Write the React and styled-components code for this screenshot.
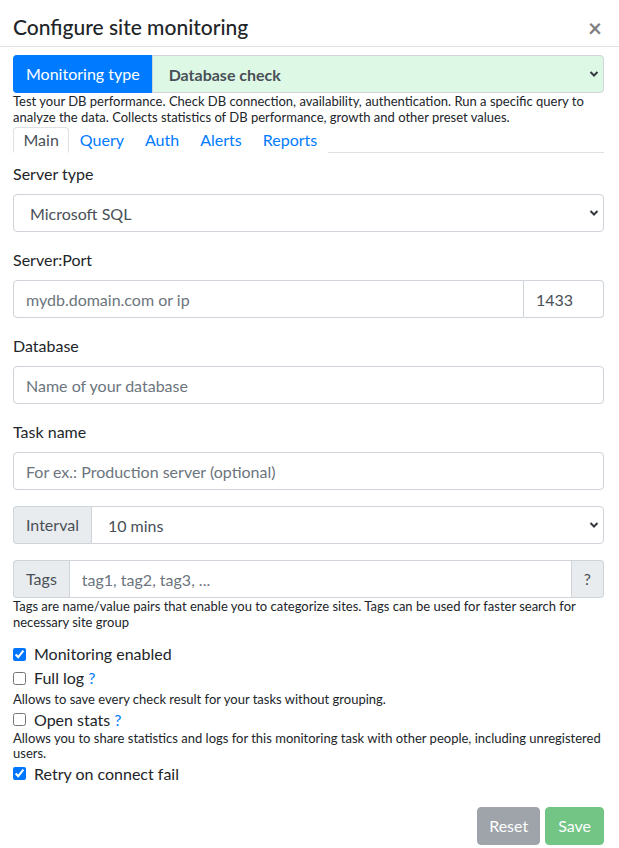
import React from "react";
import styled, { createGlobalStyle } from "styled-components";

const Global = createGlobalStyle`
  html, body { margin: 0; padding: 0; background: #fff; }
  body { font-family: Lato, "Liberation Sans", sans-serif; color: #212529; font-size: 16px; line-height: 1.5; }
  * { box-sizing: border-box; }
`;

const Modal = styled.div`
  width: 619px;
  background: #fff;
`;

const Header = styled.div`
  display: flex;
  align-items: center;
  justify-content: space-between;
  padding: 12px 15px 4px 13px;
  border-bottom: 1px solid #dee2e6;
  height: 47px;
`;

const Title = styled.h5`
  margin: 0;
  font-size: 21px;
  font-weight: 500;
  line-height: 30px;
`;

const Close = styled.button`
  border: 0;
  background: none;
  padding: 2px 2px 0 0;
  font-size: 24px;
  font-weight: 700;
  line-height: 1;
  color: #000;
  opacity: 0.5;
  font-family: inherit;
`;

const Body = styled.div`
  padding: 8px 15px 3px 13px;
`;

const Group = styled.div`
  display: flex;
  height: 38px;
  margin-bottom: ${(p) => p.$mb || 0}px;
`;

const Addon = styled.div`
  display: flex;
  align-items: center;
  padding: 0 12px;
  border: 1px solid ${(p) => (p.$primary ? "#007bff" : "#ced4da")};
  background: ${(p) => (p.$primary ? "#007bff" : "#e9ecef")};
  color: ${(p) => (p.$primary ? "#fff" : "#495057")};
  border-radius: ${(p) => (p.$right ? "0 4px 4px 0" : "4px 0 0 4px")};
  ${(p) => (p.$right ? "border-left: 0;" : "border-right: 0;")}
  white-space: nowrap;
  font-size: 16px;
`;

const SelectWrap = styled.div`
  position: relative;
  flex: 1;
  display: flex;
`;

const Select = styled.select`
  appearance: none;
  -webkit-appearance: none;
  flex: 1;
  width: 100%;
  height: 38px;
  padding: 0 28px 0 16px;
  font-family: inherit;
  font-size: 16px;
  color: #495057;
  font-weight: ${(p) => (p.$bold ? 700 : 400)};
  background: ${(p) => p.$bg || "#fff"};
  border: 1px solid #ced4da;
  border-radius: ${(p) => (p.$joined ? "0 4px 4px 0" : "4px")};
  outline: none;
`;

const Chevron = styled.svg`
  position: absolute;
  right: 5px;
  top: 15px;
  width: 10px;
  height: 8px;
  pointer-events: none;
`;

const Input = styled.input`
  flex: 1;
  min-width: 0;
  width: ${(p) => (p.$w ? `${p.$w}px` : "100%")};
  ${(p) => (p.$w ? "flex: none;" : "")}
  height: 38px;
  padding: 0 12px;
  font-family: inherit;
  font-size: 16px;
  color: #495057;
  border: 1px solid #ced4da;
  border-radius: ${(p) => p.$radius || "4px"};
  ${(p) => (p.$noLeft ? "border-left: 0;" : "")}
  outline: none;
  &::placeholder { color: #6c757d; opacity: 1; }
`;

const Hint = styled.div`
  font-size: 13px;
  line-height: 15.5px;
  color: #212529;
  margin-top: ${(p) => p.$mt || 1}px;
`;

const Tabs = styled.div`
  display: flex;
  border-bottom: 1px solid #dee2e6;
  margin-top: 2px;
`;

const Tab = styled.div`
  padding: 0 9.5px;
  line-height: 24px;
  margin-bottom: -1px;
  border: 1px solid ${(p) => (p.$active ? "#dee2e6" : "transparent")};
  border-bottom-color: ${(p) => (p.$active ? "#fff" : "transparent")};
  border-radius: 4px 4px 0 0;
  background: #fff;
  color: ${(p) => (p.$active ? "#495057" : "#007bff")};
`;

const FormGroup = styled.div`
  margin-bottom: 16px;
`;

const Label = styled.label`
  display: block;
  line-height: 24px;
  margin-bottom: 8px;
`;

const TabPane = styled.div`
  padding-top: 9px;
`;

const Checks = styled.div`
  margin-top: 12px;
`;

const CheckRow = styled.label`
  display: flex;
  align-items: center;
  line-height: 24px;
`;

const Box = styled.input`
  width: 13px;
  height: 13px;
  margin: 0 8px 0 0;
  accent-color: #0075ff;
`;

const Q = styled.span`
  color: #007bff;
  margin-left: 4px;
`;

const Footer = styled.div`
  display: flex;
  justify-content: flex-end;
  gap: 5px;
  margin-top: 21px;
`;

const Btn = styled.button`
  height: 38px;
  padding: 0 ${(p) => p.$px}px;
  font-family: inherit;
  font-size: 16px;
  color: #fff;
  border: 1px solid ${(p) => p.$c};
  background: ${(p) => p.$c};
  border-radius: 4px;
  opacity: 0.65;
`;

const Arrow = () => (
  <Chevron viewBox="0 0 10 8">
    <path d="M1.5 2 L5 5.5 L8.5 2" fill="none" stroke="#343a40" strokeWidth="2" />
  </Chevron>
);

const Field = ({ label, children }) => (
  <FormGroup>
    <Label>{label}</Label>
    {children}
  </FormGroup>
);

export default function App() {
  return (
    <>
      <Global />
      <Modal>
        <Header>
          <Title>Configure site monitoring</Title>
          <Close>×</Close>
        </Header>
        <Body>
          <Group>
            <Addon $primary>Monitoring type</Addon>
            <SelectWrap>
              <Select $joined $bold $bg="#ddf9e6" defaultValue="db">
                <option value="db">Database check</option>
              </Select>
              <Arrow />
            </SelectWrap>
          </Group>
          <Hint>
            Test your DB performance. Check DB connection, availability, authentication. Run a specific query to
            analyze the data. Collects statistics of DB performance, growth and other preset values.
          </Hint>
          <Tabs>
            <Tab $active>Main</Tab>
            <Tab>Query</Tab>
            <Tab>Auth</Tab>
            <Tab>Alerts</Tab>
            <Tab>Reports</Tab>
          </Tabs>
          <TabPane>
            <Field label="Server type">
              <SelectWrap>
                <Select defaultValue="ms">
                  <option value="ms">Microsoft SQL</option>
                </Select>
                <Arrow />
              </SelectWrap>
            </Field>
            <Field label="Server:Port">
              <Group>
                <Input placeholder="mydb.domain.com or ip" $radius="4px 0 0 4px" />
                <Input defaultValue="1433" $w={80} $radius="0 4px 4px 0" $noLeft />
              </Group>
            </Field>
            <Field label="Database">
              <Group>
                <Input placeholder="Name of your database" />
              </Group>
            </Field>
            <Field label="Task name">
              <Group>
                <Input placeholder="For ex.: Production server (optional)" />
              </Group>
            </Field>
            <Group $mb={16}>
              <Addon>Interval</Addon>
              <SelectWrap>
                <Select $joined defaultValue="10">
                  <option value="10">10 mins</option>
                </Select>
                <Arrow />
              </SelectWrap>
            </Group>
            <Group>
              <Addon>Tags</Addon>
              <Input placeholder="tag1, tag2, tag3, ..." $radius="0" />
              <Addon $right>?</Addon>
            </Group>
            <Hint>
              Tags are name/value pairs that enable you to categorize sites. Tags can be used for faster search for
              necessary site group
            </Hint>
            <Checks>
              <CheckRow>
                <Box type="checkbox" defaultChecked />
                Monitoring enabled
              </CheckRow>
              <CheckRow>
                <Box type="checkbox" />
                Full log<Q>?</Q>
              </CheckRow>
              <Hint $mt={2}>Allows to save every check result for your tasks without grouping.</Hint>
              <CheckRow>
                <Box type="checkbox" />
                Open stats<Q>?</Q>
              </CheckRow>
              <Hint $mt={-1}>
                Allows you to share statistics and logs for this monitoring task with other people, including
                unregistered users.
              </Hint>
              <CheckRow>
                <Box type="checkbox" defaultChecked />
                Retry on connect fail
              </CheckRow>
            </Checks>
            <Footer>
              <Btn $c="#6c757d" $px={11} disabled>Reset</Btn>
              <Btn $c="#28a745" $px={12} disabled>Save</Btn>
            </Footer>
          </TabPane>
        </Body>
      </Modal>
    </>
  );
}
